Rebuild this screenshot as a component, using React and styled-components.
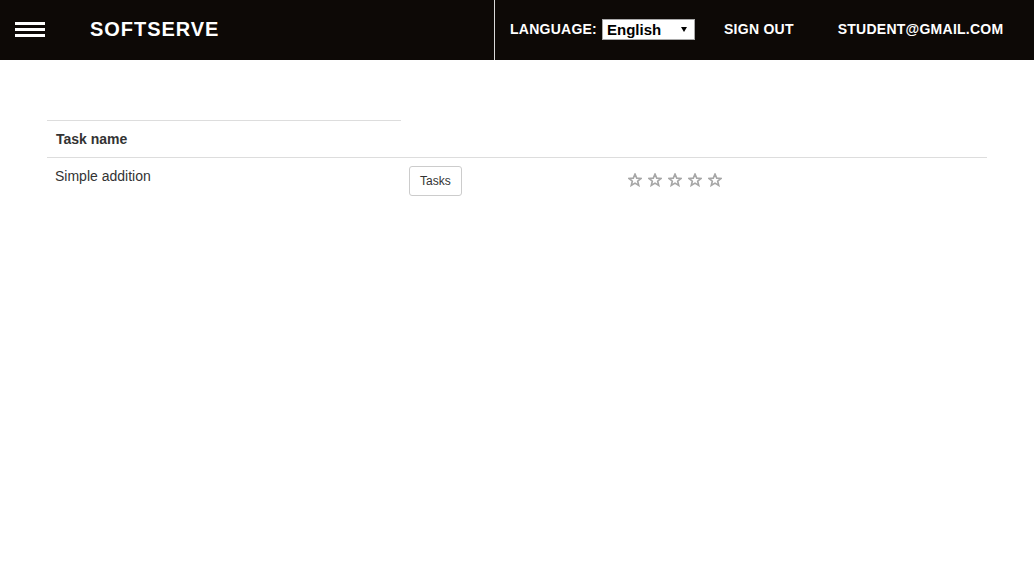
import React from "react";
import styled, { createGlobalStyle } from "styled-components";

const GlobalStyle = createGlobalStyle`
  html, body { margin: 0; padding: 0; background: #fff; }
  body {
    font-family: "Liberation Sans", Arial, sans-serif;
    font-size: 14px;
    line-height: 20px;
    color: #333;
  }
  * { box-sizing: border-box; }
`;

const Header = styled.header`
  display: flex;
  height: 60px;
  background: #0d0906;
  color: #fff;
`;

const Brand = styled.div`
  flex: 0 0 494px;
  display: flex;
  align-items: center;
  padding: 0 0 2px 15px;
`;

const Burger = styled.button`
  display: flex;
  flex-direction: column;
  gap: 3px;
  width: 30px;
  padding: 0;
  margin: 0 45px 0 0;
  border: 0;
  background: transparent;
  cursor: pointer;
  span {
    display: block;
    height: 3px;
    background: #fff;
  }
`;

const Logo = styled.div`
  font-size: 20px;
  font-weight: bold;
  letter-spacing: 0.95px;
  line-height: normal;
`;

const Nav = styled.nav`
  flex: 1;
  display: flex;
  align-items: center;
  border-left: 1px solid #d9d9d9;
  padding: 0 0 2px 15px;
`;

const NavText = styled.span`
  font-size: 14px;
  font-weight: bold;
  letter-spacing: 0.25px;
  line-height: normal;
  text-transform: uppercase;
  margin-left: ${(p) => p.$ml || 0}px;
`;

const Select = styled.div`
  display: flex;
  align-items: center;
  justify-content: space-between;
  width: 93px;
  height: 21px;
  margin-left: 5px;
  padding: 0 7px 0 4px;
  background: #fff;
  border: 1px solid #a9a9a9;
  color: #000;
  font-size: 15px;
  font-weight: bold;
  line-height: normal;
`;

const Main = styled.main`
  width: 940px;
  margin: 60px auto 0;
`;

const Table = styled.table`
  width: 100%;
  border-collapse: collapse;
  border-spacing: 0;
`;

const Th = styled.th`
  text-align: left;
  font-weight: bold;
  padding: 8px 8px 8px 9px;
  border-top: 1px solid #ddd;
  border-bottom: 1px solid #ddd;
  line-height: 20px;
`;

const Td = styled.td`
  padding: 8px;
  vertical-align: top;
  border-top: 1px solid #ddd;
  line-height: 20px;
`;

const Button = styled.button`
  font-family: "Liberation Sans", Arial, sans-serif;
  font-size: 12px;
  line-height: 18px;
  padding: 5px 10px;
  color: #333;
  background: #fff;
  border: 1px solid #ccc;
  border-radius: 3px;
  cursor: pointer;
`;

const Stars = styled.div`
  display: flex;
  gap: 6px;
  padding-top: 7px;
  svg { display: block; }
`;

const Star = () => (
  <svg width="14" height="14" viewBox="0 0 24 24">
    <polygon
      points="12,2 14.9,8.8 22.3,9.3 16.6,14.1 18.4,21.3 12,17.4 5.6,21.3 7.4,14.1 1.7,9.3 9.1,8.8"
      fill="none"
      stroke="#a6a6a6"
      strokeWidth="2.8"
      strokeLinejoin="miter"
    />
  </svg>
);

export default function App() {
  return (
    <>
      <GlobalStyle />
      <Header>
        <Brand>
          <Burger aria-label="Menu">
            <span />
            <span />
            <span />
          </Burger>
          <Logo>SOFTSERVE</Logo>
        </Brand>
        <Nav>
          <NavText>Language:</NavText>
          <Select>
            <span>English</span>
            <svg width="6" height="5" viewBox="0 0 6 5">
              <polygon points="0,0 6,0 3,5" fill="#000" />
            </svg>
          </Select>
          <NavText $ml={29}>Sign out</NavText>
          <NavText $ml={44}>student@gmail.com</NavText>
        </Nav>
      </Header>
      <Main>
        <Table>
          <colgroup>
            <col style={{ width: 354 }} />
            <col style={{ width: 219 }} />
            <col />
          </colgroup>
          <thead>
            <tr>
              <Th>Task name</Th>
            </tr>
          </thead>
          <tbody>
            <tr>
              <Td>Simple addition</Td>
              <Td>
                <Button>Tasks</Button>
              </Td>
              <Td>
                <Stars>
                  <Star />
                  <Star />
                  <Star />
                  <Star />
                  <Star />
                </Stars>
              </Td>
            </tr>
          </tbody>
        </Table>
      </Main>
    </>
  );
}
